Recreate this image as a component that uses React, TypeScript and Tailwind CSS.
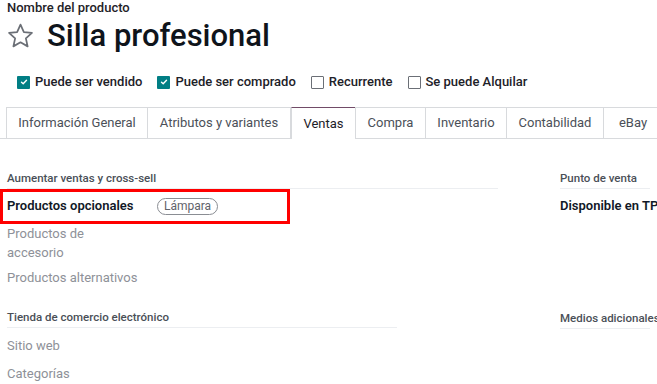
const tabs = [
  { label: 'Información General', width: 'w-[142px]' },
  { label: 'Atributos y variantes', width: 'w-[144px]' },
  { label: 'Ventas', width: 'w-[65px]', active: true },
  { label: 'Compra', width: 'w-[71px]' },
  { label: 'Inventario', width: 'w-[82px]' },
  { label: 'Contabilidad', width: 'w-[98px]' },
  { label: 'eBay', width: 'w-[60px]' }
]

const options = [
  { label: 'Puede ser vendido', checked: true },
  { label: 'Puede ser comprado', checked: true },
  { label: 'Recurrente', checked: false },
  { label: 'Se puede Alquilar', checked: false }
]

function Checkbox({ checked }: { checked: boolean }) {
  if (checked) {
    return (
      <span className="flex h-[13px] w-[13px] items-center justify-center rounded-[1px] bg-[#017e84]">
        <svg width="8" height="8" viewBox="0 0 8 8" fill="none">
          <path d="M1.5 4.2 L3.2 5.8 L6.5 2.3" stroke="white" strokeWidth="1.4" strokeLinecap="round" strokeLinejoin="round" />
        </svg>
      </span>
    )
  }
  return <span className="h-[13px] w-[13px] rounded-[1px] border border-[#6b6f76] bg-white" />
}

function SectionTitle({ children, line }: { children: string; line: string }) {
  return (
    <div className={`${line} border-b border-[#eceef1] pb-[2px] text-[11.5px] font-medium leading-[16px] text-[#4a4f57]`}>
      {children}
    </div>
  )
}

export default function App() {
  return (
    <div className="h-[384px] w-[657px] overflow-hidden bg-white font-['Roboto',sans-serif] text-[#111827]">
      <div className="px-[7px]">
        <div className="text-[13px] font-medium leading-[16px] text-[#1f2328]">Nombre del producto</div>
        <div className="flex items-center gap-[12px] pt-[1px]">
          <svg width="29" height="28" viewBox="0 0 24 24" fill="none" className="-ml-[1px]">
            <path
              d="M12 2.2 L14.9 8.6 L21.8 9.3 L16.6 14 L18.1 20.9 L12 17.4 L5.9 20.9 L7.4 14 L2.2 9.3 L9.1 8.6 Z"
              stroke="#6b6f76"
              strokeWidth="1.5"
              strokeLinejoin="round"
            />
          </svg>
          <h1 className="text-[31px] font-medium leading-[38px] text-[#0f141b]">Silla profesional</h1>
        </div>
      </div>

      <div className="mt-[18px] flex items-center gap-[15px] pl-[17px]">
        {options.map((o) => (
          <div key={o.label} className="flex items-center gap-[5px]">
            <Checkbox checked={o.checked} />
            <span className="text-[13px] font-medium leading-[18px] text-[#1d2128]">{o.label}</span>
          </div>
        ))}
      </div>

      <div className="mt-[16px] flex">
        <div className="w-[7px] shrink-0 border-b border-[#d8dadd]" />
        {tabs.map((t) =>
          t.active ? (
            <div
              key={t.label}
              className={`${t.width} flex h-[32px] shrink-0 items-center justify-center border-x border-t border-x-[#d8dadd] border-t-[#714b67] text-[13px] text-[#1d2128]`}
            >
              {t.label}
            </div>
          ) : (
            <div
              key={t.label}
              className={`${t.width} -ml-px flex h-[32px] shrink-0 items-center justify-center border border-[#d8dadd] text-[13px] text-[#4b5058] first:ml-0`}
            >
              {t.label}
            </div>
          )
        )}
        <div className="flex-1 border-b border-[#d8dadd]" />
      </div>

      <div className="mt-[31px] flex px-[7px]">
        <div className="w-[553px] shrink-0">
          <SectionTitle line="w-[491px]">Aumentar ventas y cross-sell</SectionTitle>
          <div className="mt-[7px] flex items-center">
            <div className="w-[150px] text-[13px] font-semibold leading-[20px] text-[#111827]">Productos opcionales</div>
            <span className="rounded-full border border-[#8a8d93] px-[6px] text-[12px] leading-[15px] text-[#5f636a]">Lámpara</span>
          </div>
          <div className="mt-[8px] w-[120px] text-[13px] leading-[19px] text-[#8e9198]">Productos de accesorio</div>
          <div className="mt-[6px] text-[13px] leading-[19px] text-[#8e9198]">Productos alternativos</div>

          <div className="mt-[22px]">
            <SectionTitle line="w-[390px]">Tienda de comercio electrónico</SectionTitle>
          </div>
          <div className="mt-[8px] text-[13px] leading-[19px] text-[#8e9198]">Sitio web</div>
          <div className="mt-[9px] text-[13px] leading-[19px] text-[#8e9198]">Categorías</div>
        </div>
        <div className="min-w-0 flex-1">
          <SectionTitle line="w-full">Punto de venta</SectionTitle>
          <div className="mt-[7px] whitespace-nowrap text-[13px] font-semibold leading-[20px] text-[#111827]">Disponible en TPV</div>
          <div className="mt-[94px]">
            <SectionTitle line="w-full whitespace-nowrap">Medios adicionales</SectionTitle>
          </div>
        </div>
      </div>

      <div className="pointer-events-none absolute left-0 top-[189px] h-[35px] w-[290px] border-[3px] border-[#ff0000]" />
    </div>
  )
}
